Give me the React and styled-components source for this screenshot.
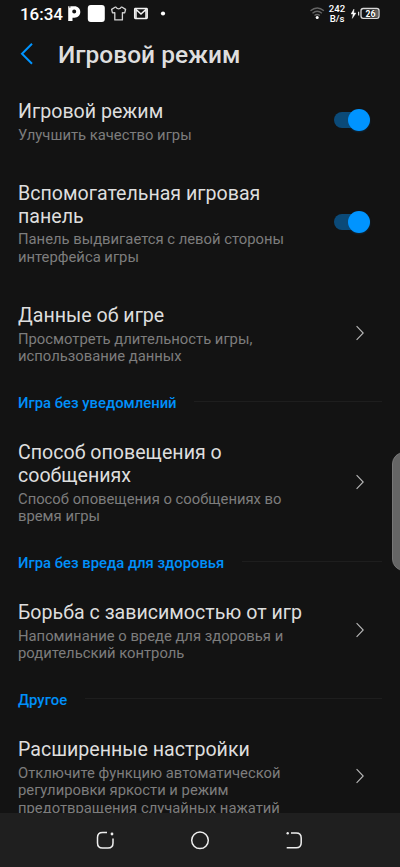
import React from "react";
import styled, { createGlobalStyle } from "styled-components";

const Global = createGlobalStyle`
  *{box-sizing:border-box}
  body{margin:0;background:#131313;overflow:hidden}
`;
const Screen = styled.div`
  position:relative;width:400px;height:867px;overflow:hidden;background:#131313;
  display:flex;flex-direction:column;font-family:Roboto,"Noto Sans",sans-serif;
`;
const StatusBar = styled.header`
  height:28px;flex:none;display:flex;align-items:center;justify-content:space-between;
  padding:0 20px 0 20px;color:#fff;
`;
const StatusGroup = styled.div`display:flex;align-items:center;height:28px;`;
const Clock = styled.span`font-size:17px;font-weight:500;line-height:28px;width:47px;letter-spacing:-.05px;white-space:nowrap;`;
const StatusIcons = styled.svg`display:block;flex:none;`;
const Speed = styled.div`
  width:20px;margin:0 4px 0 2px;font-size:9.6px;line-height:10px;font-weight:500;text-align:center;white-space:nowrap;
`;
const TitleBar = styled.div`height:52px;flex:none;display:flex;align-items:center;padding-left:20px;`;
const Back = styled.svg`display:block;flex:none;margin-right:25px;`;
const Heading = styled.h1`
  margin:0;padding-top:2px;font-size:24.5px;line-height:30px;font-weight:500;color:#dedede;white-space:nowrap;
`;
const List = styled.main`flex:1;min-height:0;overflow:hidden;`;
const Row = styled.section`
  height:${p => p.$h}px;display:flex;align-items:center;justify-content:space-between;padding:0 30px 0 18px;
`;
const Label = styled.div`padding-top:4px;white-space:nowrap;`;
const Title = styled.div`font-size:19.6px;line-height:23px;color:#dedede;`;
const Sub = styled.div`margin-top:3.8px;font-size:14.8px;line-height:17.5px;color:#7d7d7d;`;
const Switch = styled.div`
  width:36px;height:24px;flex:none;display:flex;align-items:center;
  &::before{content:"";width:34px;height:16px;border-radius:8px;background:#0b4a78;}
`;
const Knob = styled.div`
  width:22.5px;height:22.5px;flex:none;margin-left:-20px;border-radius:50%;background:#0094ff;box-shadow:0 1px 2px #004d8866;
`;
const Chevron = styled.svg`display:block;flex:none;margin-right:5px;`;
const Section = styled.div`
  height:${p => p.$h}px;display:flex;align-items:center;gap:17.5px;padding:0 18px;
  &::after{content:"";height:1px;flex:1;background:#1e1e1e;}
`;
const SectionName = styled.h2`
  margin:0;padding-top:2px;font-size:14.85px;line-height:18px;font-weight:500;color:#0090fa;white-space:nowrap;
`;
const NavBar = styled.nav`
  height:54px;flex:none;background:#1f1f1f;display:flex;align-items:center;justify-content:center;gap:75px;
`;
const NavIcon = styled.svg`display:block;`;
const EdgeHandle = styled.div`
  position:absolute;left:392px;top:452px;width:24px;height:119px;border-radius:12px;background:#656565;border:1px solid #777;
`;

const Lines = ({ text }) => text.map(t => <div key={t}>{t}</div>);

const Item = ({ h, title, sub, toggle }) => (
  <Row $h={h}>
    <Label>
      <Title><Lines text={title} /></Title>
      <Sub><Lines text={sub} /></Sub>
    </Label>
    {toggle ? <Switch><Knob /></Switch> : (
      <Chevron width="9" height="16" viewBox="0 0 9 16" fill="none" stroke="#b8b8b8" strokeWidth="1.1">
        <path d="M.6 1.2L7.2 8L.6 14.8" />
      </Chevron>
    )}
  </Row>
);

export default function App() {
  return (
    <>
      <Global />
      <Screen>
        <StatusBar>
          <StatusGroup>
            <Clock>16:34</Clock>
            <StatusIcons width="102" height="28" viewBox="67 0 102 28" fill="none">
              <path fillRule="evenodd" fill="#fff" d="M68.2 6.2h1.3v1.6h.8V6.2h4c3.7 0 6 2.5 6 5.8 0 3.3-2.4 5.7-5.8 5.7h-2V21h-4.3zM74.2 9.6a2 2 0 1 0 0 4a2 2 0 1 0 0-4z" />
              <rect x="87.8" y="5" width="17" height="17" rx="3" fill="#fff" />
              <path d="M115 7.2l-3.4 2.2.9 3.5 2.3-.2v7.2h7.6v-7.2l2.3.2.9-3.5-3.4-2.2h-1c-.5 2.2-4.7 2.2-5.2 0z" stroke="#d4d4d4" strokeWidth="1.3" strokeLinejoin="round" />
              <rect x="134.7" y="8.5" width="12.5" height="10" rx=".7" stroke="#f2f2f2" strokeWidth="1.5" />
              <path d="M136 18.5v-9l5 4.6 5-4.6v9" stroke="#f2f2f2" strokeWidth="1.5" />
              <circle cx="163" cy="13.5" r="2.1" fill="#fff" />
            </StatusIcons>
          </StatusGroup>
          <StatusGroup>
            <StatusIcons width="15" height="28" viewBox="310 0 15 28" fill="none" stroke="#656565" strokeWidth="1.4">
              <path d="M310.5 10.8q6.7-5.6 13.4 0M312.5 13.2q4.7-3.8 9.4 0M314.5 15.5q2.7-2 5.4 0" />
              <circle cx="317.2" cy="17.6" r="1.5" fill="#fff" stroke="none" />
            </StatusIcons>
            <Speed>242<br />B/s</Speed>
            <StatusIcons width="29" height="28" viewBox="351 0 29 28">
              <path d="M354 9l-3 5h2.1l-.8 4.4 3.7-5.4h-2.2z" fill="#fff" stroke="#fff" strokeWidth=".4" />
              <path d="M358.6 11.7v3.7" stroke="#ddd" strokeWidth="1.2" />
              <rect x="361" y="8.5" width="18" height="9.8" rx="2.2" fill="#131313" stroke="#d8d8d8" strokeWidth="1.3" />
              <rect x="374.5" y="9.6" width="3.5" height="7.6" rx="1" fill="#606060" />
              <text x="370.5" y="16.5" textAnchor="middle" fill="#fff" fontFamily="Roboto" fontSize="8.6" fontWeight="700">26</text>
            </StatusIcons>
          </StatusGroup>
        </StatusBar>
        <TitleBar>
          <Back width="13" height="22" viewBox="0 0 13 22" fill="none" stroke="#0094ff" strokeWidth="2">
            <path d="M12 .8L2 10.8L12 20.8" />
          </Back>
          <Heading>Игровой режим</Heading>
        </TitleBar>
        <List>
          <Item h={80} title={["Игровой режим"]} sub={["Улучшить качество игры"]} toggle />
          <Item h={124} title={["Вспомогательная игровая", "панель"]} sub={["Панель выдвигается с левой стороны", "интерфейса игры"]} toggle />
          <Item h={98} title={["Данные об игре"]} sub={["Просмотреть длительность игры,", "использование данных"]} />
          <Section $h={39}><SectionName>Игра без уведомлений</SectionName></Section>
          <Item h={121} title={["Способ оповещения о", "сообщениях"]} sub={["Способ оповещения о сообщениях во", "время игры"]} />
          <Section $h={39}><SectionName>Игра без вреда для здоровья</SectionName></Section>
          <Item h={98} title={["Борьба с зависимостью от игр"]} sub={["Напоминание о вреде для здоровья и", "родительский контроль"]} />
          <Section $h={39}><SectionName>Другое</SectionName></Section>
          <Item h={115} title={["Расширенные настройки"]} sub={["Отключите функцию автоматической", "регулировки яркости и режим", "предотвращения случайных нажатий"]} />
        </List>
        <NavBar>
          <NavIcon width="20" height="20" viewBox="0 0 20 20" fill="none" stroke="#eee" strokeWidth="1.5">
            <path d="M12 2.5H7.5q-5 0-5 5V13q0 5 5 5H13q5 0 5-5V8.500" />
            <circle cx="17" cy="4" r="1.4" fill="#eee" stroke="none" />
          </NavIcon>
          <NavIcon width="20" height="20" viewBox="0 0 20 20" fill="none" stroke="#eee" strokeWidth="1.5">
            <circle cx="10" cy="10.3" r="8.3" />
          </NavIcon>
          <NavIcon width="20" height="20" viewBox="0 0 20 20" fill="none" stroke="#eee" strokeWidth="1.5">
            <path d="M6 3h5.200q5 0 5 5v4.700q0 5-5 5H1.700" />
            <circle cx="2.700" cy="3.200" r="1.200" fill="#eee" stroke="none" />
          </NavIcon>
        </NavBar>
        <EdgeHandle />
      </Screen>
    </>
  );
}
